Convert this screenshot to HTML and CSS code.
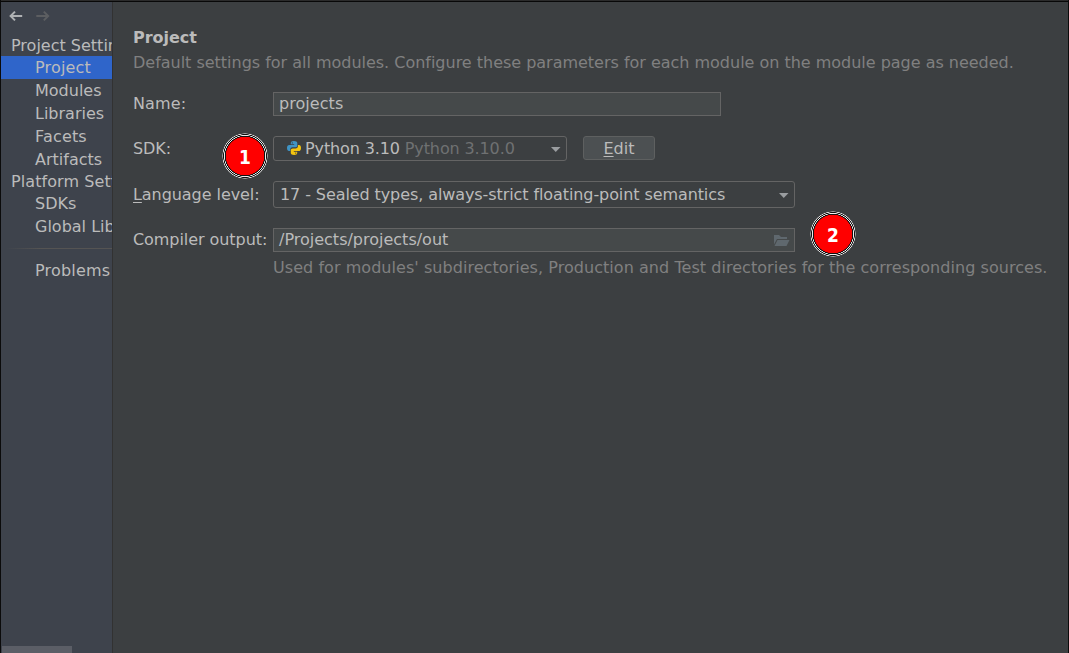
FILE: index.html
```html
<!DOCTYPE html>
<html lang="en">
<head>
<meta charset="utf-8">
<title>Project Structure</title>
<link rel="stylesheet" href="styles.css">
</head>
<body>
<div class="window">
  <nav class="sidebar">
    <div class="history">
      <svg width="14" height="12" viewBox="0 0 14 12"><path class="arrow" d="M13.2 6H1.6M6 1.6L1.6 6L6 10.4"/></svg>
      <svg width="14" height="12" viewBox="0 0 14 12"><path class="arrow arrow-off" d="M.3 6H12M7.8 1.6L12.2 6L7.8 10.4"/></svg>
    </div>
    <div class="group first">Project Settings</div>
    <div class="item selected">Project</div>
    <div class="item">Modules</div>
    <div class="item">Libraries</div>
    <div class="item facets">Facets</div>
    <div class="item">Artifacts</div>
    <div class="group second">Platform Settings</div>
    <div class="item">SDKs</div>
    <div class="item">Global Libraries</div>
    <div class="separator"></div>
    <div class="item problems">Problems</div>
    <div class="scrollbar"></div>
  </nav>
  <main class="content">
    <h1 class="title">Project</h1>
    <p class="hint">Default settings for all modules. Configure these parameters for each module on the module page as needed.</p>
    <div class="row name-row"><label class="label">Name:</label><div class="field name">projects</div></div>
    <div class="row sdk-row">
      <label class="label">SDK:</label>
      <div class="combo sdk">
        <svg class="python" width="14" height="14" viewBox="0 0 14 14">
          <path fill="#3f94c5" d="M6.9 0C4.8 0 3.8.7 3.8 2v1.3h3.4v.6H2.3C.8 3.9 0 5.1 0 7c0 1.900.8 3 2 3h1.300V8.500c0-1.300 1-2.200 2.300-2.200h2.900c1.100 0 1.800-.8 1.800-1.800V2C10.300.7 9 0 6.900 0z"/>
          <path fill="#f2c30f" d="M7.100 14c2.100 0 3.100-.7 3.100-2v-1.300H6.800v-.6h4.900c1.500 0 2.300-1.200 2.300-3.100 0-1.900-.8-3-2-3h-1.100v1.300c0 1.300-1 2.200-2.300 2.200H5.700c-1.100 0-1.900.8-1.900 1.800V12c0 1.300 1.200 2 3.300 2z"/>
          <circle cx="5.300" cy="1.900" r=".6" fill="#3c3f41"/><circle cx="8.700" cy="12.100" r=".6" fill="#3c3f41"/>
        </svg>
        <span class="sdk-name">Python 3.10 <span class="version">Python 3.10.0</span></span>
        <svg class="caret" width="10" height="5" viewBox="0 0 10 5"><path d="M0 0H9.500L4.750 5z"/></svg>
      </div>
      <button class="edit"><span class="mnemonic">E</span>dit</button>
      <span class="badge one">1</span>
    </div>
    <div class="row level-row">
      <label class="label"><span class="mnemonic">L</span>anguage level:</label>
      <div class="combo level"><span>17 - Sealed types, always-strict floating-point semantics</span>
        <svg class="caret" width="10" height="5" viewBox="0 0 10 5"><path d="M0 0H9.500L4.750 5z"/></svg></div>
    </div>
    <div class="row output-row">
      <label class="label">Compiler output:</label>
      <div class="field output"><span>/Projects/projects/out</span>
        <svg class="folder" width="16" height="12" viewBox="0 0 16 12"><path d="M0 0H5L7 2H13V4H3L0 9.500z"/><path d="M3.500 5H15.500L12.500 11H0.500z"/></svg></div>
      <span class="badge two">2</span>
    </div>
    <p class="hint output-hint">Used for modules' subdirectories, Production and Test directories for the corresponding sources.</p>
  </main>
</div>
</body>
</html>
```
FILE: styles.css
```css
* { box-sizing: border-box; }
body { margin: 0; background: #3c3f41; }
.window {
  display: flex;
  width: 1069px;
  height: 653px;
  overflow: hidden;
  padding-top: 2px;
  border-left: 1px solid #0b0b0b;
  border-right: 1px solid #0b0b0b;
  background: linear-gradient(#2b2b2b 0 1px, #080808 1px 2px, #3c3f41 2px);
  color: #bbb;
  font: 16px/22px "DejaVu Sans", sans-serif;
  white-space: nowrap;
}
.sidebar {
  position: relative;
  display: flex;
  flex-direction: column;
  flex: none;
  width: 112px;
  overflow: hidden;
  border-right: 1px solid #323232;
  background: #3e434c;
}
.history { display: flex; gap: 13px; height: 32px; padding: 8px 0 0 8px; flex: none; }
.arrow { fill: none; stroke: #afb1b3; stroke-width: 2; }
.arrow-off { stroke: #5c5e61; }
.group { height: 22px; padding-left: 10px; }
.group.first { line-height: 24px; }
.group.second { line-height: 21px; height: 21px; letter-spacing: 0.08px; }
.item { height: 23px; line-height: 23px; padding-left: 34px; }
.selected, .problems, .facets { letter-spacing: 0.18px; }
.selected { background: #2f65ca; }
.separator {
  height: 1px;
  margin: 10px 0;
  background: linear-gradient(90deg, transparent 5px, #555453 40px);
}
.scrollbar { width: 70px; height: 7px; margin: auto 0 0 1px; background: #5b5e66; }
.content { width: 955px; padding: 24px 0 0 20px; }
.title { margin: 0; font-size: 16px; line-height: 23px; letter-spacing: -0.05px; }
.hint { margin: 3px 0 0; color: #808080; letter-spacing: -0.015px; }
.row { position: relative; display: flex; align-items: flex-start; }
.name-row { height: 44px; margin-top: 18px; }
.sdk-row { height: 45px; }
.level-row { height: 47px; }
.output-row { height: 24px; }
.label { width: 140px; flex: none; letter-spacing: -0.06px; }
.name-row .label { letter-spacing: 0.15px; }
.name-row .label, .output-row .label { line-height: 23px; }
.sdk-row .label { line-height: 25px; }
.level-row .label { line-height: 27px; }
.field {
  height: 24px;
  border: 1px solid #646464;
  background: #45494a;
  line-height: 22px;
  padding-left: 5px;
}
.name { width: 448px; letter-spacing: 0.06px; }
.output { display: flex; width: 522px; }
.combo { display: flex; border: 1px solid #646464; border-radius: 3px; }
.sdk { width: 294px; height: 25px; padding-left: 13px; line-height: 23px; }
.sdk-name { letter-spacing: -0.12px; }
.level { width: 522px; height: 27px; padding-left: 6px; line-height: 25px; letter-spacing: -0.09px; }
.version { color: #6f7172; }
.python { margin: 4px 4px 0 0; }
.caret { margin: auto 5px auto auto; transform: translateY(1px); fill: #9a9da0; }
.folder { margin: 6px 4px 0 auto; fill: #5f686e; }
.edit {
  width: 72px;
  height: 24px;
  margin-left: 16px;
  padding: 1px 0 0;
  border: 1px solid #5e6060;
  border-radius: 3px;
  background: #4c5052;
  color: #bbb;
  font: 16px/22px "DejaVu Sans", sans-serif;
}
.mnemonic { text-decoration: underline; text-decoration-thickness: 1px; text-underline-offset: 2px; }
.badge {
  position: absolute;
  width: 46px;
  height: 46px;
  border-radius: 50%;
  background: radial-gradient(circle, #f00 19px, #111 19.5px 20px, #eee 20.4px 20.7px, #111 21.2px 21.6px, #ddd 22px 22.3px, transparent 22.8px);
  color: #fff;
  font: bold 19px/48px "DejaVu Sans Condensed", "DejaVu Sans", sans-serif;
  font-stretch: condensed;
  text-align: center;
}
.one { left: 89px; top: -3px; }
.two { left: 677px; top: -17px; }
.output-hint { margin: 4px 0 0 140px; line-height: 24px; letter-spacing: 0.05px; }
```
